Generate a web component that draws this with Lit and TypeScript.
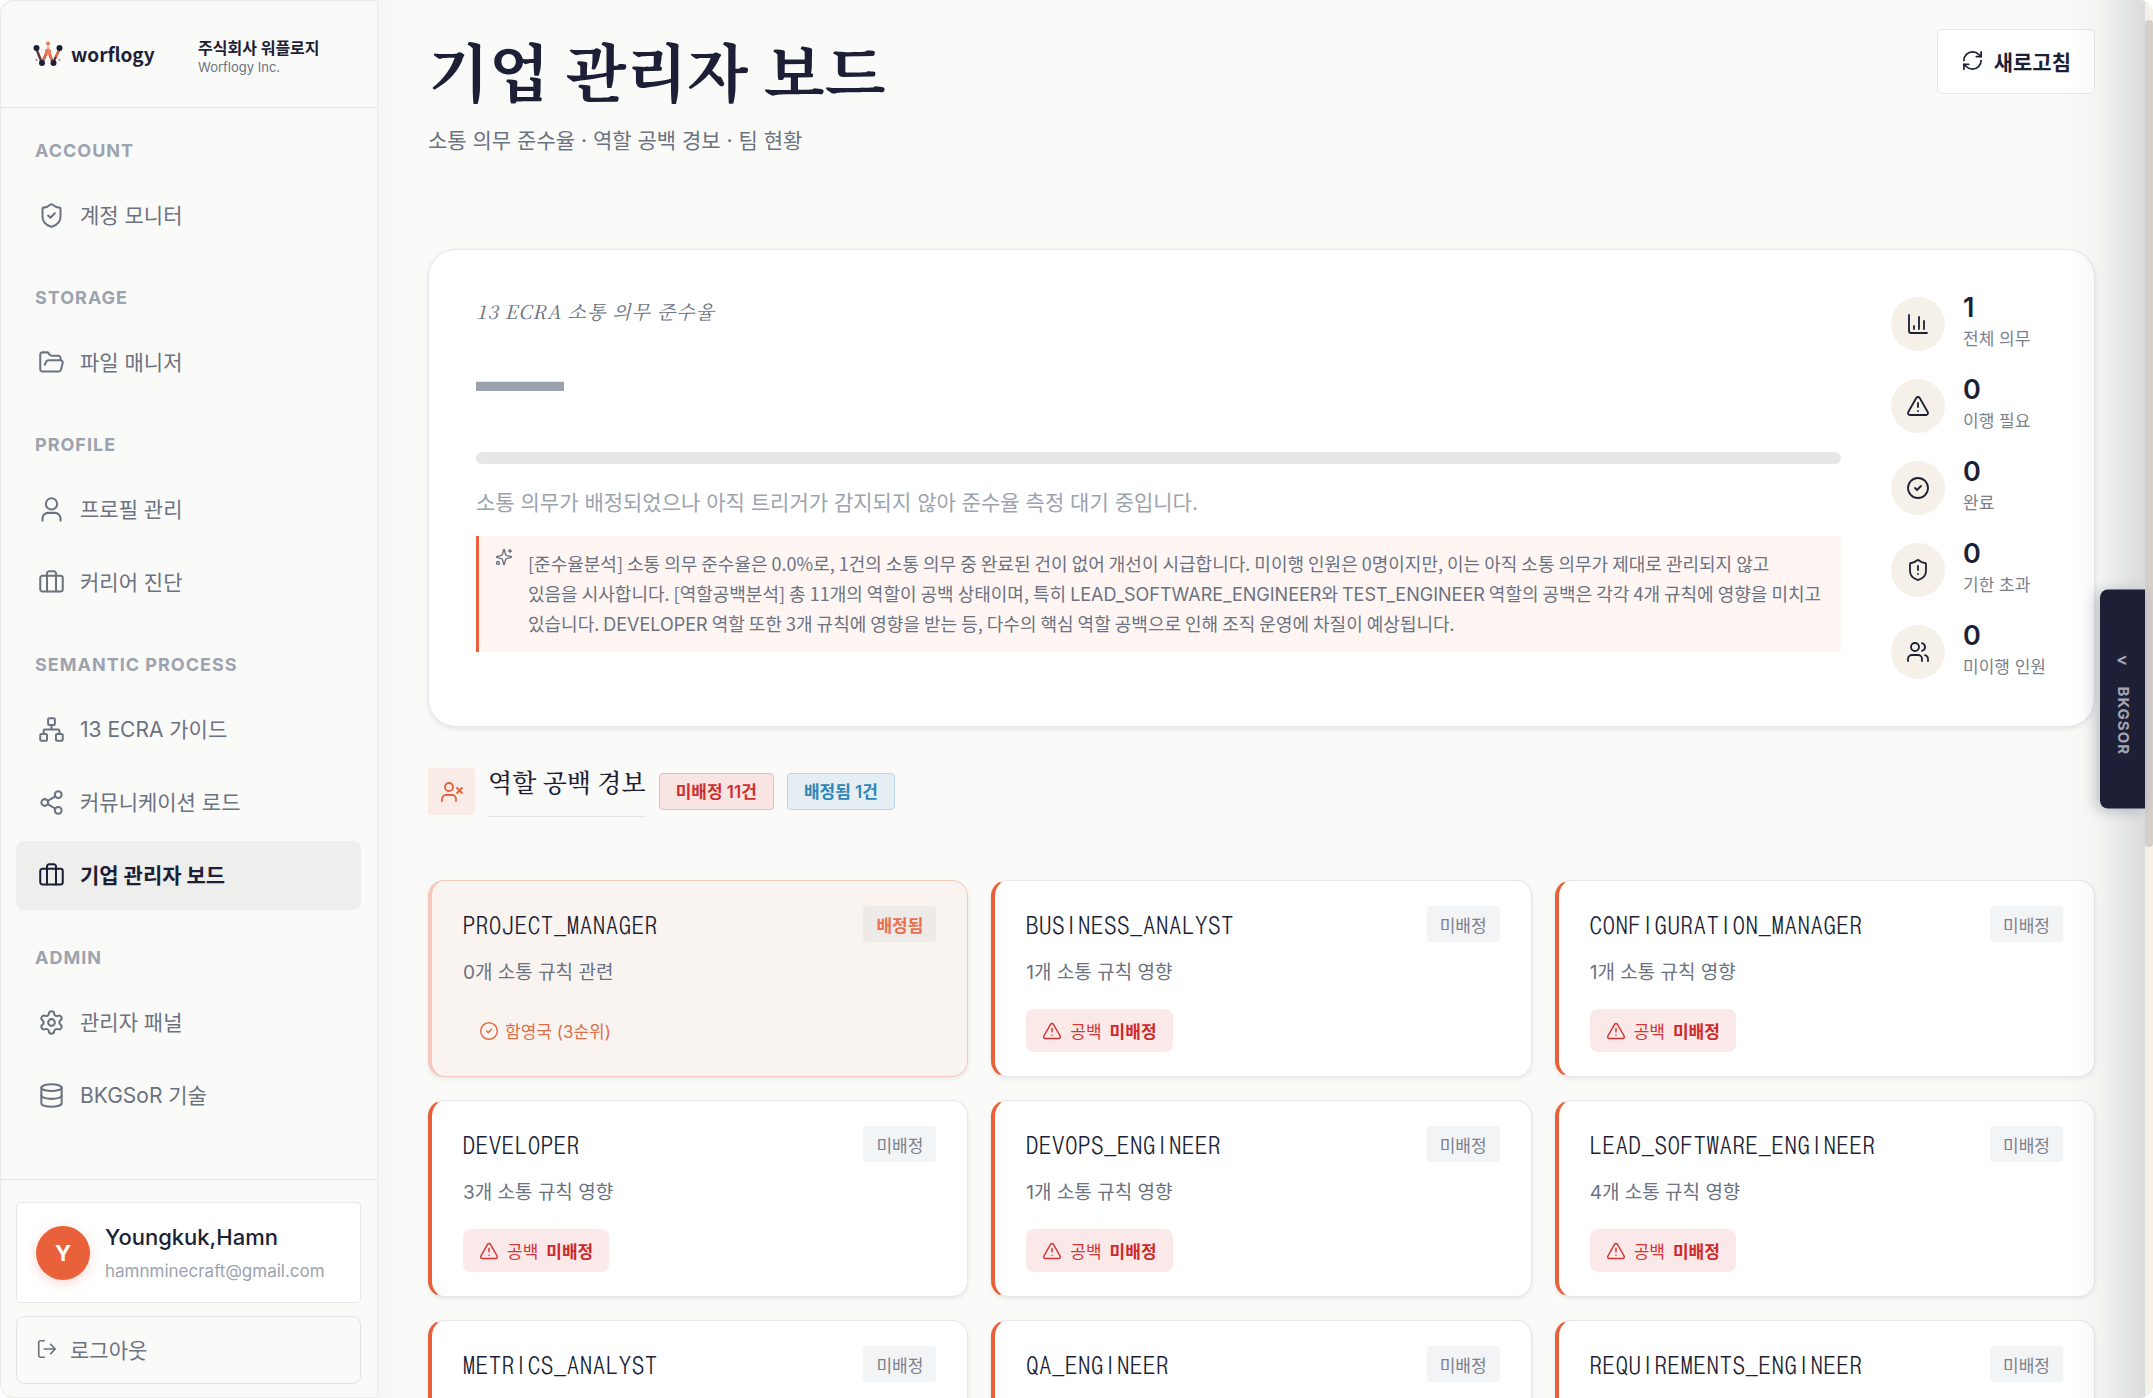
import { LitElement, html, css, svg, type TemplateResult } from "lit";
import { customElement, property } from "lit/decorators.js";
import { classMap } from "lit/directives/class-map.js";

const ICONS: Record<string, TemplateResult> = {
  shieldCheck: svg`<path d="M20 13c0 5-3.5 7.5-7.66 8.95a1 1 0 0 1-.67-.01C7.5 20.5 4 18 4 13V6a1 1 0 0 1 1-1c2 0 4.500-1.200 6.240-2.720a1.170 1.170 0 0 1 1.520 0C14.510 3.810 17 5 19 5a1 1 0 0 1 1 1z"/><path d="m9 12 2 2 4-4"/>`,
  shieldAlert: svg`<path d="M20 13c0 5-3.5 7.5-7.66 8.95a1 1 0 0 1-.67-.01C7.5 20.5 4 18 4 13V6a1 1 0 0 1 1-1c2 0 4.500-1.200 6.240-2.720a1.170 1.170 0 0 1 1.520 0C14.510 3.810 17 5 19 5a1 1 0 0 1 1 1z"/><path d="M12 8v4M12 16h.01"/>`,
  folder: svg`<path d="m6 14 1.500-2.900A2 2 0 0 1 9.240 10H20a2 2 0 0 1 1.940 2.500l-1.540 6a2 2 0 0 1-1.950 1.500H4a2 2 0 0 1-2-2V5a2 2 0 0 1 2-2h3.900a2 2 0 0 1 1.690.900l.810 1.200a2 2 0 0 0 1.670.900H18a2 2 0 0 1 2 2v2"/>`,
  user: svg`<circle cx="12" cy="7" r="5"/><path d="M20 22v-2a5 5 0 0 0-5-5H9a5 5 0 0 0-5 5v2"/>`,
  briefcase: svg`<path d="M16 20V4a2 2 0 0 0-2-2h-4a2 2 0 0 0-2 2v16"/><rect width="20" height="14" x="2" y="6" rx="2"/>`,
  network: svg`<rect x="16" y="16" width="6" height="6" rx="1"/><rect x="2" y="16" width="6" height="6" rx="1"/><rect x="9" y="2" width="6" height="6" rx="1"/><path d="M5 16v-3a1 1 0 0 1 1-1h12a1 1 0 0 1 1 1v3M12 12V8"/>`,
  share: svg`<circle cx="18" cy="5" r="3"/><circle cx="6" cy="12" r="3"/><circle cx="18" cy="19" r="3"/><path d="m8.590 13.510 6.830 3.980M15.410 6.510l-6.820 3.980"/>`,
  gear: svg`<path d="M9.671 4.136a2.340 2.340 0 0 1 4.659 0 2.340 2.340 0 0 0 3.319 1.915 2.340 2.340 0 0 1 2.330 4.033 2.340 2.340 0 0 0 0 3.831 2.340 2.340 0 0 1-2.330 4.033 2.340 2.340 0 0 0-3.319 1.915 2.340 2.340 0 0 1-4.659 0 2.340 2.340 0 0 0-3.320-1.915 2.340 2.340 0 0 1-2.330-4.033 2.340 2.340 0 0 0 0-3.831A2.340 2.340 0 0 1 6.350 6.051a2.340 2.340 0 0 0 3.319-1.915"/><circle cx="12" cy="12" r="3"/>`,
  database: svg`<ellipse cx="12" cy="5" rx="9" ry="3"/><path d="M3 5v14a9 3 0 0 0 18 0V5"/><path d="M3 12a9 3 0 0 0 18 0"/>`,
  logout: svg`<path d="m16 17 5-5-5-5M21 12H9M9 21H5a2 2 0 0 1-2-2V5a2 2 0 0 1 2-2h4"/>`,
  refresh: svg`<path d="M3 12a9 9 0 0 1 9-9 9.750 9.750 0 0 1 6.740 2.740L21 8"/><path d="M21 3v5h-5"/><path d="M21 12a9 9 0 0 1-9 9 9.750 9.750 0 0 1-6.740-2.740L3 16"/><path d="M8 16H3v5"/>`,
  chart: svg`<path d="M3 3v16a2 2 0 0 0 2 2h16M18 17V9M13 17V5M8 17v-3"/>`,
  warning: svg`<path d="m21.730 18-8-14a2 2 0 0 0-3.480 0l-8 14A2 2 0 0 0 4 21h16a2 2 0 0 0 1.730-3"/><path d="M12 9v4M12 17h.01"/>`,
  check: svg`<circle cx="12" cy="12" r="10"/><path d="m9 12 2 2 4-4"/>`,
  users: svg`<path d="M16 21v-2a4 4 0 0 0-4-4H6a4 4 0 0 0-4 4v2"/><circle cx="9" cy="7" r="4"/><path d="M22 21v-2a4 4 0 0 0-3-3.870M16 3.130a4 4 0 0 1 0 7.750"/>`,
  userOff: svg`<path d="M16 21v-2a4 4 0 0 0-4-4H6a4 4 0 0 0-4 4v2"/><circle cx="9" cy="7" r="4"/><path d="m17 8 5 5M22 8l-5 5"/>`,
  sparkles: svg`<path d="M9.940 15.500A2 2 0 0 0 8.500 14.060l-6.140-1.580a.5.5 0 0 1 0-.960L8.500 9.940A2 2 0 0 0 9.940 8.500l1.580-6.140a.5.5 0 0 1 .960 0l1.580 6.140a2 2 0 0 0 1.440 1.440l6.140 1.580a.5.5 0 0 1 0 .960l-6.140 1.580a2 2 0 0 0-1.440 1.440l-1.580 6.140a.5.5 0 0 1-.960 0z"/><path d="M20 2v4M22 4h-4"/><circle cx="4" cy="20" r="2"/>`,
};

@customElement("line-icon")
class LineIcon extends LitElement {
  @property() name = "";
  static styles = css`
    :host { display: inline-flex; flex: none; width: 24px; height: 24px; }
    svg { width: 100%; height: 100%; fill: none; stroke: currentColor; stroke-width: 1.8; stroke-linecap: round; stroke-linejoin: round; }
  `;
  render() {
    return html`<svg viewBox="0 0 24 24" aria-hidden="true">${ICONS[this.name]}</svg>`;
  }
}

interface NavItem { icon: string; label: string; active?: boolean }
const NAV: { title: string; items: NavItem[] }[] = [
  { title: "ACCOUNT", items: [{ icon: "shieldCheck", label: "계정 모니터" }] },
  { title: "STORAGE", items: [{ icon: "folder", label: "파일 매니저" }] },
  { title: "PROFILE", items: [{ icon: "user", label: "프로필 관리" }, { icon: "briefcase", label: "커리어 진단" }] },
  {
    title: "SEMANTIC PROCESS",
    items: [
      { icon: "network", label: "13 ECRA 가이드" },
      { icon: "share", label: "커뮤니케이션 로드" },
      { icon: "briefcase", label: "기업 관리자 보드", active: true },
    ],
  },
  { title: "ADMIN", items: [{ icon: "gear", label: "관리자 패널" }, { icon: "database", label: "BKGSoR 기술" }] },
];

const STATS = [
  { icon: "chart", value: 1, label: "전체 의무" },
  { icon: "warning", value: 0, label: "이행 필요" },
  { icon: "check", value: 0, label: "완료" },
  { icon: "shieldAlert", value: 0, label: "기한 초과" },
  { icon: "users", value: 0, label: "미이행 인원" },
];

interface Role { name: string; rules: number; assignee?: string }
const ROLES: Role[] = [
  { name: "PROJECT_MANAGER", rules: 0, assignee: "함영국 (3순위)" },
  { name: "BUSINESS_ANALYST", rules: 1 },
  { name: "CONFIGURATION_MANAGER", rules: 1 },
  { name: "DEVELOPER", rules: 3 },
  { name: "DEVOPS_ENGINEER", rules: 1 },
  { name: "LEAD_SOFTWARE_ENGINEER", rules: 4 },
  { name: "METRICS_ANALYST", rules: 1 },
  { name: "QA_ENGINEER", rules: 1 },
  { name: "REQUIREMENTS_ENGINEER", rules: 1 },
];

@customElement("side-nav")
class SideNav extends LitElement {
  static styles = css`
    :host { display: flex; flex-direction: column; box-sizing: border-box; width: 378px; flex: none; border-right: 1px solid #e9e9e9; color: #6b7280; }
    * { box-sizing: border-box; }
    .brand { display: flex; align-items: center; height: 108px; padding: 0 33px; border-bottom: 1px solid #e5e6e7; }
    .mark { width: 30px; height: 26px; margin-right: 8px; }
    .word { font: 700 19px/28px "Noto Sans CJK KR", sans-serif; color: #1c1f36; width: 127px; }
    .company { display: flex; flex-direction: column; padding-top: 6px; }
    .company strong { font-size: 16px; line-height: 20px; color: #1c1f36; white-space: nowrap; }
    .company small { font-size: 13px; line-height: 18px; }
    nav { flex: 1; padding: 30px 16px 0; min-height: 0; overflow: hidden; }
    section + section { margin-top: 35px; }
    h2 { margin: 0 0 17px; padding-left: 19px; font-size: 18px; line-height: 26px; font-weight: 700; letter-spacing: 1px; color: #9ca3af; }
    ul { list-style: none; margin: 0; padding: 0; display: flex; flex-direction: column; gap: 4px; }
    .item { display: flex; align-items: center; gap: 15px; height: 69px; padding: 0 22px; border-radius: 8px; font-size: 21px; line-height: 32px; color: inherit; text-decoration: none; font-weight: 400; }
    .item line-icon { width: 27px; height: 27px; }
    .item.active { background: #eeeeed; color: #1c1f36; font-weight: 700; }
    footer { border-top: 1px solid #e5e6e7; padding: 22px 16px 14px; display: flex; flex-direction: column; gap: 13px; }
    .user { display: flex; align-items: center; gap: 15px; height: 101px; padding: 0 19px; background: #fff; border: 1px solid #e8e8ea; border-radius: 4px; }
    .avatar { display: grid; place-items: center; width: 54px; height: 54px; flex: none; border-radius: 50%; background: #e8613a; color: #fff; font-weight: 700; font-size: 22px; box-shadow: 0 3px 12px rgba(232, 97, 58, 0.25); }
    .who { display: flex; flex-direction: column; }
    .who strong { font-size: 22px; line-height: 36px; font-weight: 500; color: #1c1f36; }
    .who span { font-size: 17px; line-height: 32px; color: #9ca3af; }
    button { display: flex; align-items: center; gap: 12px; height: 68px; padding: 0 19px 2px; background: none; border: 1px solid #e2e3e5; border-radius: 8px; font: inherit; font-size: 21px; color: inherit; }
    button line-icon { width: 22px; height: 22px; }
  `;
  render() {
    return html`
      <div class="brand">
        <svg class="mark" viewBox="0 0 30 26" aria-hidden="true">
          <path d="M3 7 9 22 15 9 20 22 27 7" fill="none" stroke="#5a3138" stroke-width="2.400" stroke-linejoin="round" />
          <path d="M10 19 15 8l4 11M23 16l3-7" fill="none" stroke="#e8704f" stroke-width="2.200" />
          <path d="M15 2v8" stroke="#f5b39d" stroke-width="1.500" />
          <circle cx="15" cy="11" r="3.200" fill="#ee7a58" /><circle cx="15" cy="2.500" r="2" fill="#ee7a58" />
          <circle cx="3.500" cy="7" r="3" fill="#1c1f36" /><circle cx="26.500" cy="7" r="3" fill="#1c1f36" />
          <circle cx="9" cy="22" r="3" fill="#1c1f36" /><circle cx="20.500" cy="22" r="3" fill="#1c1f36" />
          <circle cx="3.500" cy="19" r="1.200" fill="#a5a7b0" /><circle cx="26.500" cy="19" r="1.200" fill="#a5a7b0" />
        </svg>
        <span class="word">worflogy</span>
        <div class="company"><strong>주식회사 워플로지</strong><small>Worflogy Inc.</small></div>
      </div>
      <nav>
        ${NAV.map((s) => html`<section>
          <h2>${s.title}</h2>
          <ul>${s.items.map((i) => html`<li><a href="#" class=${classMap({ item: true, active: !!i.active })}><line-icon name=${i.icon}></line-icon>${i.label}</a></li>`)}</ul>
        </section>`)}
      </nav>
      <footer>
        <div class="user">
          <span class="avatar">Y</span>
          <div class="who"><strong>Youngkuk,Hamn</strong><span>hamnminecraft@gmail.com</span></div>
        </div>
        <button type="button"><line-icon name="logout"></line-icon>로그아웃</button>
      </footer>`;
  }
}

@customElement("role-card")
class RoleCard extends LitElement {
  @property({ attribute: false }) role!: Role;
  static styles = css`
    :host { display: block; min-width: 0; }
    .card { box-sizing: border-box; height: 100%; padding: 25px 31px 24px 31px; background: #fff; border: 1px solid #e7e7e9; border-left: 4px solid #e8613a; border-radius: 16px; box-shadow: 0 2px 4px rgba(28, 31, 54, 0.08); }
    .assigned { background: #faf4f0; border-color: #f3c9bb; }
    .top { display: flex; align-items: center; justify-content: space-between; height: 36px; }
    h3 { margin: 0; font: 400 24px/36px DotumChe, "Noto Sans Mono CJK KR", "Liberation Mono", monospace; letter-spacing: 1px; color: #1c1f36; }
    .badge { display: flex; align-items: center; height: 36px; padding: 0 13px; border-radius: 4px; background: #f3f4f6; color: #7b818c; font-size: 17px; }
    .assigned .badge { background: #eeeae7; color: #e8704f; font-weight: 600; }
    p { margin: 16px 0 21px; font-size: 19px; line-height: 30px; color: #6b7280; }
    .chip { display: inline-flex; align-items: center; gap: 8px; height: 43px; padding: 0 16px; border-radius: 8px; background: #fbe8e8; color: #d23636; font-size: 17px; vertical-align: top; }
    .chip line-icon { width: 20px; height: 20px; }
    .chip strong { font-weight: 700; color: #cf2a2a; }
    .assigned .chip { background: none; color: #e06e4b; gap: 6px; }
  `;
  render() {
    const { name, rules, assignee } = this.role;
    return html`<article class=${classMap({ card: true, assigned: !!assignee })}>
      <div class="top"><h3>${name}</h3><span class="badge">${assignee ? "배정됨" : "미배정"}</span></div>
      <p>${rules}개 소통 규칙 ${assignee ? "관련" : "영향"}</p>
      ${assignee
        ? html`<span class="chip"><line-icon name="check"></line-icon>${assignee}</span>`
        : html`<span class="chip"><line-icon name="warning"></line-icon><span>공백</span><strong>미배정</strong></span>`}
    </article>`;
  }
}

@customElement("app-root")
class AppRoot extends LitElement {
  static styles = css`
    :host { display: block; font-family: Inter, "Noto Sans CJK KR", sans-serif; color: #1c1f36; background: #fff; }
    * { box-sizing: border-box; }
    .shell { position: relative; display: flex; height: 100vh; overflow: hidden; background: #fafaf8; border-radius: 14px; box-shadow: inset 0 0 0 1px #ebebea; }
    main { flex: 1; min-width: 0; padding: 29px 50px 0; background: linear-gradient(90deg, #f5f5f4, #fafaf8 20px); overflow: hidden; }
    .head { display: flex; justify-content: space-between; align-items: flex-start; }
    h1 { margin: 0 0 16px; font: 700 63px/80px "Noto Serif CJK KR", "Noto Serif KR", serif; }
    .head p { margin: 0 0 92px; font-size: 21px; line-height: 32px; color: #6b7280; }
    .refresh { display: flex; align-items: center; gap: 10px; height: 65px; padding: 0 23px 2px 23px; background: #fff; border: 1px solid #e5e6ea; border-radius: 5px; font: inherit; font-size: 21px; font-weight: 600; color: inherit; }
    .refresh line-icon { width: 23px; height: 23px; }
    .hero { display: flex; gap: 50px; padding: 43px 48px 43px 47px; background: #fff; border: 1px solid #e7e7e9; border-radius: 28px; box-shadow: 0 2px 5px rgba(28, 31, 54, 0.1); }
    .rate { flex: 1; min-width: 0; padding-top: 2px; }
    .eyebrow { font: italic 400 19px/32px "Noto Serif CJK KR", "Noto Serif KR", serif; letter-spacing: 1px; color: #6b7280; }
    .value { margin-top: 10px; font-size: 88px; line-height: 88px; font-weight: 600; color: #9ca3af; }
    .bar { height: 12px; margin-top: 27px; border-radius: 6px; background: #e7e7e9; }
    .note { margin: 22px 0 16px; font-size: 21px; line-height: 34px; color: #9ca3af; }
    .ai { display: flex; gap: 15px; padding: 12px 8px 14px 16px; border-left: 3px solid #e8613a; border-radius: 0 4px 4px 0; background: #fff6f4; color: #6b7280; }
    .ai line-icon { width: 18px; height: 18px; }
    .ai p { margin: 0; font-family: "Noto Sans CJK KR", sans-serif; font-size: 18px; line-height: 30px; word-break: keep-all; }
    .ai p span { font-family: Inter, sans-serif; line-height: 20px; }
    .stats { display: flex; flex-direction: column; gap: 20px; margin: 0; }
    .stat { display: flex; align-items: center; gap: 18px; height: 62px; }
    .disc { display: grid; place-items: center; width: 54px; height: 54px; border-radius: 50%; background: #f5f0e8; }
    .stat div { display: flex; flex-direction: column-reverse; }
    dt { font-size: 17px; line-height: 32px; color: #7b818c; white-space: nowrap; }
    dd { margin: 0; font-size: 27px; line-height: 30px; font-weight: 600; }
    .alert { display: flex; align-items: center; gap: 13px; margin: 39px 0 63px; }
    .tile { display: grid; place-items: center; width: 47px; height: 47px; border-radius: 4px; background: #f9ebe6; color: #e8613a; }
    h2 { margin: 0; padding-bottom: 19px; border-bottom: 1px solid #e5e6e7; font: 500 25px/31px "Noto Serif CJK KR", "Noto Serif KR", serif; }
    .tag { display: flex; align-items: center; height: 37px; padding: 0 16px 2px; border: 1px solid #f0b9b9; border-radius: 4px; background: #f8e4e3; color: #cf2f2f; font-size: 17px; font-weight: 600; }
    .tag.blue { border-color: #b9d5e6; background: #e5eef3; color: #2f86ba; }
    .grid { display: grid; grid-template-columns: repeat(3, minmax(0, 1fr)); gap: 23px; }
    .scroll { width: 8px; flex: none; padding-top: 20px; background: #f5f0e8; }
    .thumb { height: 60%; border-radius: 4px; background: #d3cfca; }
    .shade { position: absolute; top: 0; right: 8px; bottom: 0; width: 76px; pointer-events: none; background: linear-gradient(90deg, rgba(110, 120, 130, 0), rgba(110, 120, 130, 0.05) 40%, rgba(110, 120, 130, 0.24)); }
    .drawer { position: absolute; right: 8px; top: 50%; transform: translateY(-50%); display: flex; align-items: center; justify-content: center; gap: 18px; width: 45px; height: 219px; padding: 6px 0 0; border: 0; border-radius: 8px 0 0 8px; background: #1c1f36; color: #a4a5af; font: 700 15px/20px Inter, sans-serif; letter-spacing: 1px; writing-mode: vertical-rl; box-shadow: -4px 2px 14px rgba(28, 31, 54, 0.25); }
    .caret { writing-mode: horizontal-tb; font-size: 17px; }
  `;
  render() {
    return html`<div class="shell">
      <side-nav></side-nav>
      <main>
        <header class="head">
          <div><h1>기업 관리자 보드</h1><p>소통 의무 준수율 · 역할 공백 경보 · 팀 현황</p></div>
          <button class="refresh" type="button"><line-icon name="refresh"></line-icon>새로고침</button>
        </header>
        <section class="hero">
          <div class="rate">
            <div class="eyebrow">13 ECRA 소통 의무 준수율</div>
            <div class="value">—</div>
            <div class="bar" role="progressbar" aria-label="준수율"></div>
            <p class="note">소통 의무가 배정되었으나 아직 트리거가 감지되지 않아 준수율 측정 대기 중입니다.</p>
            <div class="ai">
              <line-icon name="sparkles"></line-icon>
              <p>[준수율분석] 소통 의무 준수율은 0.0%로, 1건의 소통 의무 중 완료된 건이 없어 개선이 시급합니다. 미이행 인원은 0명이지만, 이는 아직 소통 의무가 제대로 관리되지 않고<br>있음을 시사합니다. [역할공백분석] 총 11개의 역할이 공백 상태이며, 특히 <span>LEAD_SOFTWARE_ENGINEER</span>와 <span>TEST_ENGINEER</span> 역할의 공백은 각각 4개 규칙에 영향을 미치고 있습니다. <span>DEVELOPER</span> 역할 또한 3개 규칙에 영향을 받는 등, 다수의 핵심 역할 공백으로 인해 조직 운영에 차질이 예상됩니다.</p>
            </div>
          </div>
          <dl class="stats">
            ${STATS.map((s) => html`<div class="stat"><span class="disc"><line-icon name=${s.icon}></line-icon></span><div><dt>${s.label}</dt><dd>${s.value}</dd></div></div>`)}
          </dl>
        </section>
        <div class="alert">
          <span class="tile"><line-icon name="userOff"></line-icon></span>
          <h2>역할 공백 경보</h2>
          <span class="tag">미배정 11건</span>
          <span class="tag blue">배정됨 1건</span>
        </div>
        <section class="grid">${ROLES.map((r) => html`<role-card .role=${r}></role-card>`)}</section>
      </main>
      <div class="scroll"><div class="thumb"></div></div>
      <div class="shade"></div>
      <button class="drawer" type="button"><span class="caret">&lt;</span><span>BKGSOR</span></button>
    </div>`;
  }
}
